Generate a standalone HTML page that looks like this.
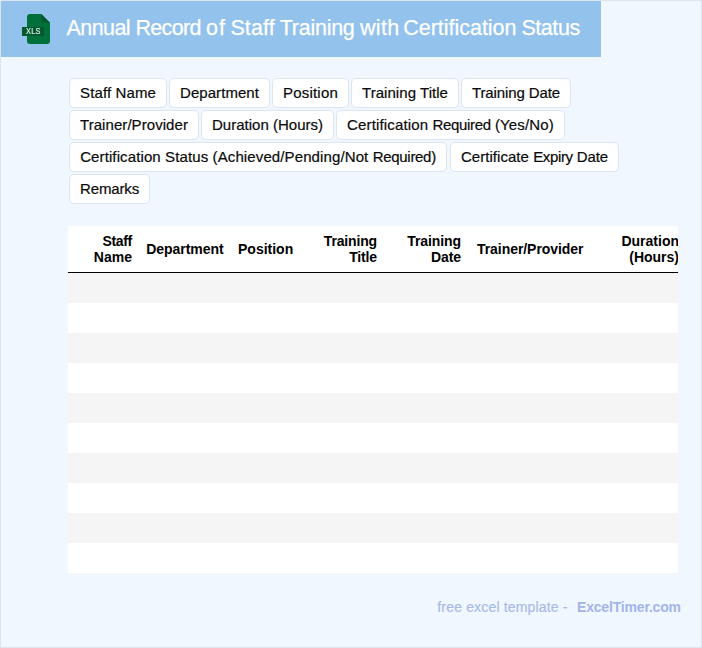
<!DOCTYPE html>
<html><head><meta charset="utf-8">
<style>
html,body{margin:0;padding:0;}
body{width:702px;height:648px;overflow:hidden;background:#f0f7ff;font-family:"Liberation Sans",sans-serif;position:relative;}
.frame{position:absolute;left:0;top:0;width:700px;height:646px;border:1px solid #dce5ee;}
.hdr{position:absolute;left:1px;top:1px;width:600px;height:56px;background:#93c2ec;}
h1{position:absolute;left:0;top:15.5px;margin:0;font-size:21.5px;-webkit-text-stroke:0.25px #fff;font-weight:400;color:#fff;white-space:nowrap;line-height:normal;}
h1 span{position:absolute;top:0;}
.icon{position:absolute;left:0;top:0;will-change:transform;}
.tag{position:absolute;box-sizing:border-box;height:30px;line-height:28px;border:1px solid #dde6ef;border-radius:5px;background:#fff;color:#0a0a0a;-webkit-text-stroke:0.2px #0a0a0a;font-size:15px;text-align:center;white-space:nowrap;}
.tbl{position:absolute;left:68px;top:226px;width:610px;height:347px;background:#fff;}
.clip{position:absolute;left:0;top:0;width:678px;height:648px;overflow:hidden;}
.th{position:absolute;top:226px;height:46px;font-weight:bold;font-size:14px;line-height:16px;color:#000;display:flex;align-items:center;white-space:nowrap;}
.hline{position:absolute;left:68px;top:272px;width:610px;height:1px;background:#000;}
.row{position:absolute;left:68px;width:610px;height:30px;background:#f5f5f5;}
.foot{position:absolute;top:599px;font-size:14px;color:#a8bbea;-webkit-text-stroke:0.2px #a8bbea;white-space:nowrap;}
</style></head><body>
<div class="frame"></div>
<div class="hdr"></div>
<h1><span style="left:66.6px;letter-spacing:-0.58px">Annual</span> <span style="left:135.4px;letter-spacing:-0.66px">Record</span> <span style="left:205.9px;letter-spacing:1.2px">of</span> <span style="left:230.4px;letter-spacing:0.12px">Staff</span> <span style="left:279.8px;letter-spacing:-0.27px">Training</span> <span style="left:359.9px;letter-spacing:0.37px">with</span> <span style="left:403.3px;letter-spacing:-0.03px">Certification</span> <span style="left:521.4px;letter-spacing:-0.44px">Status</span></h1>
<div class="tag" style="left:69px;top:78px;width:98px;letter-spacing:0.123px">Staff Name</div><div class="tag" style="left:169px;top:78px;width:101px;letter-spacing:0.062px">Department</div><div class="tag" style="left:272px;top:78px;width:77px;letter-spacing:0.202px">Position</div><div class="tag" style="left:351px;top:78px;width:108px;letter-spacing:0.049px">Training Title</div><div class="tag" style="left:461px;top:78px;width:110px;letter-spacing:-0.115px">Training Date</div><div class="tag" style="left:69px;top:110px;width:130px;letter-spacing:0.064px">Trainer/Provider</div><div class="tag" style="left:201px;top:110px;width:133px;letter-spacing:0.008px">Duration (Hours)</div><div class="tag" style="left:336px;top:110px;width:229px;letter-spacing:0.025px"><span style="letter-spacing:0.15px">Certification </span><span style="letter-spacing:-0.35px">Required</span><span style="letter-spacing:0.14px"> (Yes/No)</span></div><div class="tag" style="left:69px;top:142px;width:378px;letter-spacing:0.048px"><span style="letter-spacing:0.114px">Certification Status (Achieved/Pending/Not </span><span style="letter-spacing:-0.3px">Required)</span></div><div class="tag" style="left:450px;top:142px;width:169px;letter-spacing:-0.097px"><span style="letter-spacing:0.045px">Certificate </span><span style="letter-spacing:-0.35px">Expiry</span> Date</div><div class="tag" style="left:69px;top:174px;width:81px;letter-spacing:-0.146px">Remarks</div>
<div class="tbl"></div>
<div class="row" style="top:273px"></div><div class="row" style="top:333px"></div><div class="row" style="top:393px"></div><div class="row" style="top:453px"></div><div class="row" style="top:513px"></div>
<div class="row" style="top:573px;height:1px"></div>
<div class="hline"></div>
<div class="clip">
<div class="th" style="right:546px;text-align:right;"><div><span style="letter-spacing:-0.3px">Staff</span><br>Name</div></div>
<div class="th" style="left:146.300px;top:226px;letter-spacing:-0.05px">Department</div>
<div class="th" style="left:238px;top:226px">Position</div>
<div class="th" style="right:301px;text-align:right;letter-spacing:-0.15px"><div>Training<br>Title</div></div>
<div class="th" style="right:217px;text-align:right;letter-spacing:-0.1px"><div>Training<br>Date</div></div>
<div class="th" style="left:477px;top:226px;letter-spacing:-0.06px">Trainer/Provider</div>
<div class="th" style="right:-1px;text-align:right;"><div>Duration<br>(Hours)</div></div>
</div>
<div class="foot" style="left:437.300px;letter-spacing:0.17px">free excel template -</div>
<div class="foot" style="left:577px;font-weight:bold;color:#a3b5e8;-webkit-text-stroke:0;letter-spacing:-0.18px">ExcelTimer.com</div>
<svg class="icon" width="64" height="56" viewBox="0 0 64 56">
<path d="M30 14h11.300l8.700 8.700V41a3 3 0 0 1-3 3H30a3 3 0 0 1-3-3V17a3 3 0 0 1 3-3z" fill="#02703b"/>
<path d="M41.300 14l8.700 8.700h-8.700z" fill="#025b2f"/>
<rect x="22" y="27" width="22" height="9" fill="#025b2f"/>
<text transform="translate(33.350,34.200) scale(0.820,1)" font-family="Liberation Sans, sans-serif" font-size="9" fill="#dfeae3" stroke="#dfeae3" stroke-width="0.150" text-anchor="middle" letter-spacing="0.300">XLS</text>
</svg>
</body></html>
